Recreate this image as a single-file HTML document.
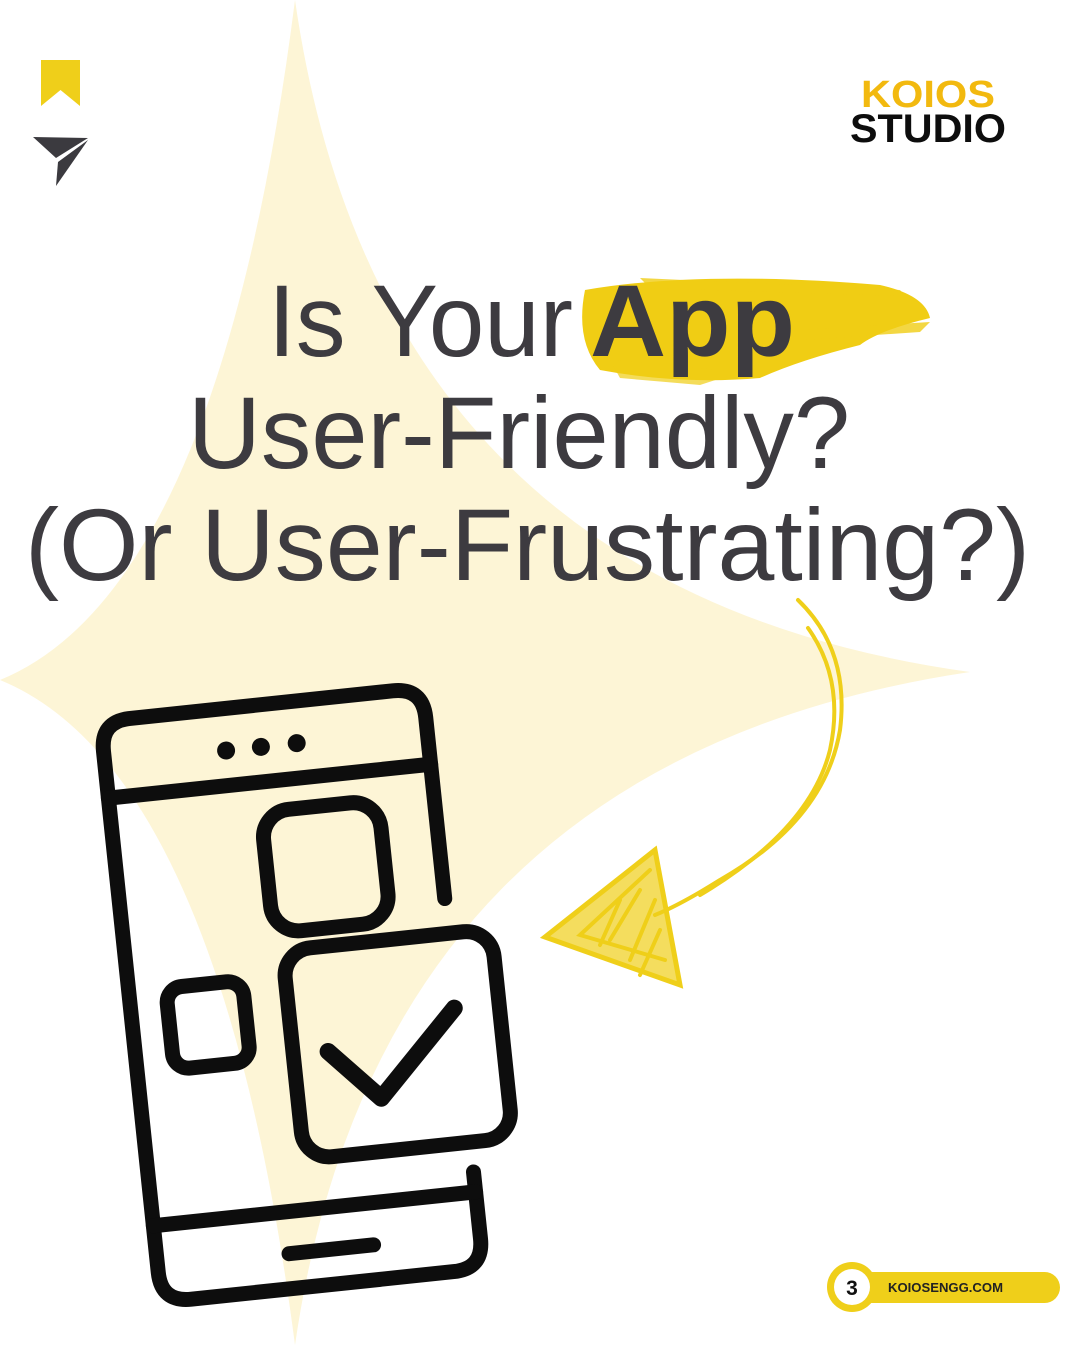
<!DOCTYPE html>
<html><head><meta charset="utf-8"><style>
html,body{margin:0;padding:0;background:#fff;}
body{width:1080px;height:1350px;overflow:hidden;position:relative;font-family:"Liberation Sans",sans-serif;}
</style></head><body>
<svg width="1080" height="1350" viewBox="0 0 1080 1350" style="position:absolute;left:0;top:0">
<!-- star -->
<path d="M295 0 Q380 590 970 672 Q380 760 295 1345 Q220 770 0 680 Q220 590 295 0 Z" fill="#fdf5d6"/>
<!-- bookmark -->
<path d="M41 60 H80 V106 L60.5 90 L41 106 Z" fill="#efcf1a"/>
<!-- send -->
<path d="M33 137 L88 138 L56 158 Z" fill="#3b3a3f"/>
<path d="M88 140 L58 162 L56 186 Z" fill="#3b3a3f"/>
<!-- brush -->
<g fill="#f0cd14">
<path d="M585 290 Q700 270 880 285 Q925 295 930 318 Q880 330 860 345 Q800 360 760 378 Q680 385 600 370 Q575 340 585 290Z"/>
<path d="M640 278 L900 290 L905 296 L650 288Z" opacity=".8"/>
<path d="M800 330 L930 322 L920 332 L800 340Z" opacity=".8"/>
<path d="M610 360 L740 372 L700 385 L620 378Z" opacity=".7"/>
</g>
<!-- title -->
<g fill="#3d3b40" font-family="Liberation Sans, sans-serif" font-size="102">
<text x="268" y="356" textLength="305" lengthAdjust="spacingAndGlyphs">Is Your</text>
<text x="590" y="356" textLength="205" lengthAdjust="spacingAndGlyphs" font-weight="bold">App</text>
<text x="188" y="468" textLength="662" lengthAdjust="spacingAndGlyphs">User-Friendly?</text>
<text x="25" y="580" textLength="1005" lengthAdjust="spacingAndGlyphs">(Or User-Frustrating?)</text>
</g>
<!-- arrow -->
<g fill="none" stroke="#efcf1a" stroke-width="4" stroke-linecap="round">
<path d="M798 600 Q850 650 840 730 Q825 820 720 880 Q680 905 655 915"/>
<path d="M808 628 Q845 680 830 750 Q810 830 700 895"/>
<path d="M655 850 L545 937 L680 985 Z" stroke-width="5"/>
<path d="M650 870 L580 935 L665 960 M640 890 L610 940 M655 900 L630 960 M620 900 L600 945 M660 930 L640 975" stroke-width="4"/>
</g>
<path d="M655 850 L545 937 L680 985 Z" fill="#efcf1a" opacity=".7"/>
<!-- phone -->
<g transform="translate(292 995) rotate(-6)" fill="none" stroke="#0d0d0d" stroke-width="15" stroke-linecap="round" stroke-linejoin="round">
<path d="M162 -80 V-262 Q162 -292 132 -292 H-132 Q-162 -292 -162 -262 V262 Q-162 292 -132 292 H132 Q162 292 162 262 V195"/>
<path d="M-162 -215 H162"/>
<path d="M-162 215 H162"/>
<path d="M-30 257 H55"/>
<rect x="-12" y="-185" width="118" height="122" rx="28"/>
<rect x="-125" y="-20" width="77" height="82" rx="16"/>
<rect x="-5" y="-45" width="210" height="210" rx="28"/>
<path d="M30 60 L78 112 L160 30" stroke-width="17"/>
</g>
<g transform="translate(292 995) rotate(-6)" fill="#0d0d0d">
<circle cx="-40" cy="-250" r="9"/><circle cx="-5" cy="-250" r="9"/><circle cx="31" cy="-250" r="9"/>
</g>
<!-- logo -->
<text x="861" y="107" font-size="38" font-weight="bold" fill="#f2b90f" textLength="134" lengthAdjust="spacingAndGlyphs">KOIOS</text>
<text x="850" y="142" font-size="40" font-weight="bold" fill="#0d0d0d" textLength="156" lengthAdjust="spacingAndGlyphs">STUDIO</text>
<!-- footer -->
<rect x="840" y="1272" width="220" height="31" rx="15.5" fill="#efcf1a"/>
<circle cx="852" cy="1287" r="25" fill="#efcf1a"/>
<circle cx="852" cy="1287" r="18" fill="#fff"/>
<text x="852" y="1295" font-size="21" font-weight="bold" text-anchor="middle" fill="#111">3</text>
<text x="888" y="1292" font-size="13" font-weight="bold" fill="#222" textLength="115" lengthAdjust="spacingAndGlyphs">KOIOSENGG.COM</text>
</svg>
</body></html>
